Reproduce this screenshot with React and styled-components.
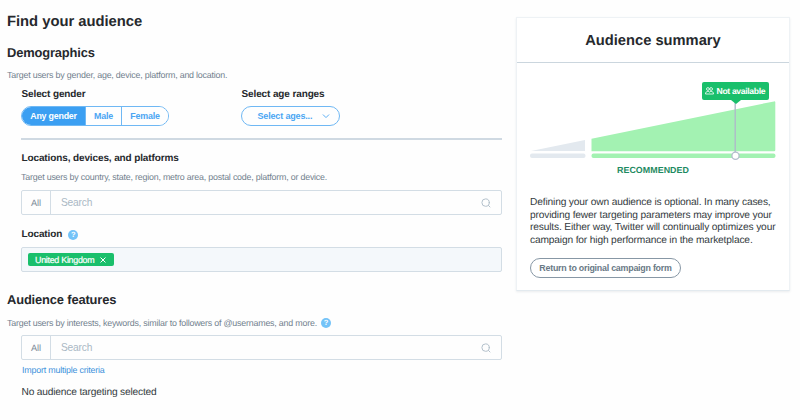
import React from 'react';
import styled, { createGlobalStyle } from 'styled-components';

const GlobalStyle = createGlobalStyle`
  *,
  *::before,
  *::after {
    box-sizing: border-box;
  }

  body {
    margin: 0;
    background-color: #fefefe;
    color: #26292d;
    font-family: 'Liberation Sans', Arial, sans-serif;
    text-rendering: geometricPrecision;
  }

  h1, h2, h3, p {
    margin: 0;
  }

  button, input {
    font-family: inherit;
  }
`;

const Page = styled.main`
  display: flex;
  align-items: flex-start;
  gap: 14px;
  width: 800px;
  height: 420px;
  padding: 12px 10px 0 7px;
  overflow: hidden;
`;

const Column = styled.div`
  width: 495px;
`;

const Title = styled.h1`
  font-size: 14.8px;
  line-height: 20px;
  letter-spacing: -0.03px;
`;

const Section = styled.section`
  margin-top: ${({ $top }) => $top}px;
`;

const Heading = styled.h2`
  font-size: 12.9px;
  line-height: 16px;
  letter-spacing: -0.15px;
`;

const Description = styled.p`
  display: flex;
  align-items: center;
  gap: 4px;
  margin-top: ${({ $top }) => $top}px;
  font-size: 8.9px;
  line-height: 10px;
  letter-spacing: -0.21px;
  color: #73828f;
  white-space: nowrap;
`;

const Indent = styled.div`
  margin-top: ${({ $top }) => $top}px;
  padding-left: 14px;
`;

const Filters = styled.div`
  display: grid;
  grid-template-columns: 220px 1fr;
  padding-bottom: 12px;
  border-bottom: 2px solid #cfd9e2;
`;

const Label = styled.h3`
  display: flex;
  align-items: center;
  gap: 6px;
  padding-left: 0.5px;
  font-size: 10px;
  line-height: 12px;
  letter-spacing: -0.12px;
`;

const Segments = styled.div`
  display: flex;
  width: 148px;
  height: 20px;
  margin-top: 5px;
  border: 1px solid #6fb8f4;
  border-radius: 10px;
  overflow: hidden;
`;

const Segment = styled.button`
  width: ${({ $width }) => $width}px;
  padding: 0;
  border: 0;
  border-left: ${({ $active }) => ($active ? 0 : '1px solid #6fb8f4')};
  background-color: ${({ $active }) => ($active ? '#3b9ff2' : '#fefefe')};
  color: ${({ $active }) => ($active ? '#fff' : '#4ba6f3')};
  font-size: 8.9px;
  font-weight: 700;
  letter-spacing: -0.22px;
`;

const Select = styled.button`
  display: flex;
  align-items: center;
  justify-content: space-between;
  width: 99px;
  height: 20px;
  margin-top: 5px;
  padding: 0 9px 0 15.5px;
  border: 1px solid #6fb8f4;
  border-radius: 10px;
  background-color: #fefefe;
  color: #4ba6f3;
  font-size: 9px;
  font-weight: 700;
  letter-spacing: -0.16px;
`;

const SearchBox = styled.div`
  display: flex;
  align-items: center;
  height: 25px;
  margin-top: ${({ $top }) => $top}px;
  padding-right: 10px;
  border: 1px solid #d3dde5;
  border-radius: 2px;
`;

const Scope = styled.span`
  display: flex;
  align-items: center;
  justify-content: center;
  width: 29px;
  height: 100%;
  border-right: 1px solid #d3dde5;
  color: #7b8a97;
  font-size: 9.2px;
`;

const Input = styled.input`
  flex: 1;
  padding: 0 10px;
  border: 0;
  outline: 0;
  background: none;
  font-size: 10.2px;
  letter-spacing: -0.18px;

  &::placeholder {
    color: #aab8c4;
  }
`;

const Help = styled.span`
  display: flex;
  align-items: center;
  justify-content: center;
  width: 10px;
  height: 10px;
  border-radius: 50%;
  background-color: #74c3f8;
  color: #fff;
  font-size: 7.5px;
  font-weight: 700;
  line-height: 10px;
  letter-spacing: 0;
`;

const TagBox = styled.div`
  display: flex;
  align-items: center;
  height: 25px;
  margin-top: 6px;
  padding-left: 6px;
  border: 1px solid #d3dde5;
  border-radius: 2px;
  background-color: #f4f8fb;
`;

const Tag = styled.span`
  display: flex;
  align-items: center;
  gap: 6px;
  width: 86px;
  height: 13px;
  padding-left: 7px;
  border-radius: 2px;
  background-color: #19bf6b;
  color: #fff;
  font-size: 8.9px;
  letter-spacing: -0.27px;
  -webkit-text-stroke: 0.2px #fff;
  white-space: nowrap;
`;

const ImportLink = styled.a`
  display: block;
  margin-top: 5px;
  padding-left: 1px;
  font-size: 8.9px;
  line-height: 10px;
  letter-spacing: -0.2px;
  color: #3d92dc;
`;

const Empty = styled.p`
  margin-top: 12px;
  padding-left: 0.5px;
  font-size: 10.2px;
  line-height: 12px;
  letter-spacing: -0.18px;
  color: #333a40;
`;

const Card = styled.aside`
  width: 274px;
  height: 274px;
  margin-top: 5px;
  border: 1px solid #eef2f5;
  border-bottom-color: #e3eaef;
  background-color: #fff;
  box-shadow: 0 1px 2px rgba(101, 119, 134, 0.12);
`;

const CardTitle = styled.h2`
  height: 45px;
  border-bottom: 1px solid #cbd6de;
  font-size: 14.7px;
  line-height: 47px;
  text-align: center;
`;

const CardBody = styled.div`
  padding: 17px 13px 0;
`;

const Chart = styled.div`
  position: relative;
  height: 81px;

  svg {
    display: block;
  }
`;

const Tooltip = styled.div`
  position: absolute;
  top: 2px;
  left: 172px;
  display: flex;
  align-items: center;
  gap: 2.5px;
  width: 67px;
  height: 18px;
  padding-left: 3px;
  border-radius: 2px;
  background-color: #19bf6b;
  color: #fff;
  font-size: 8.6px;
  font-weight: 700;
  letter-spacing: -0.33px;
  white-space: nowrap;

  &::after {
    content: '';
    position: absolute;
    top: 18px;
    left: 29px;
    border: 5px solid transparent;
    border-top: 4px solid #19bf6b;
    border-bottom: 0;
  }
`;

const Recommended = styled.p`
  margin-top: 4px;
  font-size: 8.9px;
  font-weight: 700;
  line-height: 11px;
  letter-spacing: 0.05px;
  color: #1d8a61;
  text-align: center;
`;

const Copy = styled.p`
  margin-top: 21px;
  font-size: 10.2px;
  line-height: 12.67px;
  letter-spacing: -0.15px;
  color: #333a40;
  white-space: nowrap;
`;

const ReturnButton = styled.button`
  display: block;
  width: 151px;
  height: 20px;
  margin-top: 10.3px;
  padding: 0;
  border: 1px solid #8797a5;
  border-radius: 10px;
  background-color: #fff;
  color: #697986;
  font-size: 8.9px;
  font-weight: 700;
  letter-spacing: -0.24px;
`;

const SearchIcon = () => (
  <svg width="10" height="10" viewBox="0 0 10 10" fill="none" stroke="#b3c0cb" strokeLinecap="round">
    <circle cx="4.6" cy="4.6" r="3.7" />
    <path d="M7.4 7.4 9 9" />
  </svg>
);

const ChevronIcon = () => (
  <svg width="8" height="5" viewBox="0 0 8 5" fill="none" stroke="#5baef4" strokeLinecap="round">
    <path d="M1.2.8 4 3.6 6.8.8" />
  </svg>
);

const CloseIcon = () => (
  <svg width="6" height="6" viewBox="0 0 6 6" fill="none" stroke="#fff" strokeLinecap="round">
    <path d="m.8.8 4.4 4.4M5.2.8.8 5.2" />
  </svg>
);

const PeopleIcon = () => (
  <svg width="9" height="8" viewBox="0 0 9 8" fill="none" stroke="#fff" strokeWidth=".8">
    <circle cx="2.9" cy="2" r="1.4" />
    <circle cx="6.1" cy="2" r="1.4" />
    <path d="M.5 7c0-1.8 1-2.6 2.4-2.6.8 0 1.3.3 1.6.7.3-.4.8-.7 1.6-.7 1.4 0 2.4.8 2.4 2.6z" />
  </svg>
);

const AudienceChart = () => (
  <Chart>
    <svg width="246" height="81" viewBox="0 0 246 81">
      <path d="M1 71 55 60v11z" fill="#e3e9ef" />
      <rect y="73.5" width="55.5" height="4.4" rx="2" fill="#e3e9ef" />
      <path d="M61.5 58.7 244 21.4q1.3-.2 1.3 1V70q0 1.2-1.2 1.2H61.5z" fill="#a3f2b2" />
      <rect x="61.5" y="73.5" width="184" height="4.4" rx="2" fill="#a3f2b2" />
      <path d="M205.2 22v50" stroke="#aebac9" strokeWidth="1.4" />
      <circle cx="205.5" cy="75.7" r="3.6" fill="#fff" stroke="#b3becd" strokeWidth="1.3" />
    </svg>
    <Tooltip>
      <PeopleIcon />
      Not available
    </Tooltip>
  </Chart>
);

const Search = ({ top }) => (
  <SearchBox $top={top}>
    <Scope>All</Scope>
    <Input placeholder="Search" />
    <SearchIcon />
  </SearchBox>
);

const App = () => (
  <>
    <GlobalStyle />
    <Page>
      <Column>
        <Title>Find your audience</Title>
        <Section $top={13}>
          <Heading>Demographics</Heading>
          <Description $top={9}>Target users by gender, age, device, platform, and location.</Description>
          <Indent $top={9}>
            <Filters>
              <div>
                <Label>Select gender</Label>
                <Segments>
                  <Segment $width={63} $active>Any gender</Segment>
                  <Segment $width={36}>Male</Segment>
                  <Segment $width={47}>Female</Segment>
                </Segments>
              </div>
              <div>
                <Label>Select age ranges</Label>
                <Select>
                  Select ages...
                  <ChevronIcon />
                </Select>
              </div>
            </Filters>
          </Indent>
          <Indent $top={13}>
            <Label>Locations, devices, and platforms</Label>
            <Description $top={7}>
              Target users by country, state, region, metro area, postal code, platform, or device.
            </Description>
            <Search top={8} />
          </Indent>
          <Indent $top={14}>
            <Label>
              Location
              <Help>?</Help>
            </Label>
            <TagBox>
              <Tag>
                United Kingdom
                <CloseIcon />
              </Tag>
            </TagBox>
          </Indent>
        </Section>
        <Section $top={20}>
          <Heading>Audience features</Heading>
          <Description $top={10}>
            Target users by interests, keywords, similar to followers of @usernames, and more.
            <Help>?</Help>
          </Description>
          <Indent $top={7}>
            <Search top={0} />
            <ImportLink>Import multiple criteria</ImportLink>
            <Empty>No audience targeting selected</Empty>
          </Indent>
        </Section>
      </Column>
      <Card>
        <CardTitle>Audience summary</CardTitle>
        <CardBody>
          <AudienceChart />
          <Recommended>RECOMMENDED</Recommended>
          <Copy>
            Defining your own audience is optional. In many cases,
            <br />
            providing fewer targeting parameters may improve your
            <br />
            results. Either way, Twitter will continually optimizes your
            <br />
            campaign for high performance in the marketplace.
          </Copy>
          <ReturnButton>Return to original campaign form</ReturnButton>
        </CardBody>
      </Card>
    </Page>
  </>
);

export default App;
